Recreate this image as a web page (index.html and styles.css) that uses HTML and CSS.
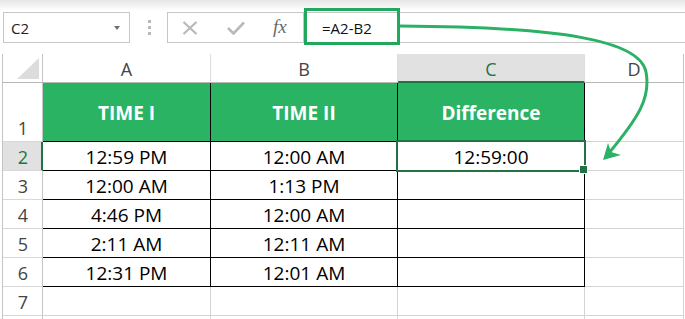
FILE: index.html
```html
<!DOCTYPE html>
<html>
<head>
<meta charset="utf-8">
<link rel="stylesheet" href="styles.css">
</head>
<body>
<div class="app">
  <div class="shade"></div>
  <div class="fbar">
    <div class="namebox"><span class="nb-text">C2</span><span class="nb-arrow"></span></div>
    <div class="grip"><i></i><i></i><i></i></div>
    <div class="formula">
      <div class="btns">
        <span class="btn bx"><svg width="16" height="14" viewBox="0 0 16 14"><path d="M1.5 1 L14.5 13 M14.5 1 L1.5 13" stroke="#b9b9b9" stroke-width="2.2" fill="none"/></svg></span>
        <span class="btn bc"><svg width="18" height="14" viewBox="0 0 18 14"><path d="M1 7 L6.5 12.5 L17 1.5" stroke="#b9b9b9" stroke-width="2.6" fill="none"/></svg></span>
        <span class="btn fx">fx</span>
      </div>
      <div class="input">=A2-B2</div>
    </div>
  </div>
  <div class="fbox"></div>

  <div class="sheet">
    <div class="corner"><svg width="22" height="21" viewBox="0 0 22 21"><polygon points="22,0 22,21 0,21" fill="#dcdcdc"/></svg></div>
    <div class="ch">A</div>
    <div class="ch">B</div>
    <div class="ch chs">C</div>
    <div class="ch">D</div>

    <div class="rh">1</div>
    <div class="c t g">TIME I</div>
    <div class="c t g">TIME II</div>
    <div class="c t g">Difference</div>
    <div class="c"></div>

    <div class="rh rhs">2</div>
    <div class="c t">12:59 PM</div>
    <div class="c t">12:00 AM</div>
    <div class="c t sel">12:59:00</div>
    <div class="c"></div>

    <div class="rh">3</div>
    <div class="c t">12:00 AM</div>
    <div class="c t">1:13 PM</div>
    <div class="c t"></div>
    <div class="c"></div>

    <div class="rh">4</div>
    <div class="c t">4:46 PM</div>
    <div class="c t">12:00 AM</div>
    <div class="c t"></div>
    <div class="c"></div>

    <div class="rh">5</div>
    <div class="c t">2:11 AM</div>
    <div class="c t">12:11 AM</div>
    <div class="c t"></div>
    <div class="c"></div>

    <div class="rh">6</div>
    <div class="c t">12:31 PM</div>
    <div class="c t">12:01 AM</div>
    <div class="c t"></div>
    <div class="c"></div>

    <div class="rh">7</div>
    <div class="c"></div>
    <div class="c"></div>
    <div class="c"></div>
    <div class="c"></div>

    <div class="rh"></div>
    <div class="c"></div>
    <div class="c"></div>
    <div class="c"></div>
    <div class="c"></div>
  </div>

  <svg class="arrow" width="685" height="319" viewBox="0 0 685 319">
    <path d="M400 26 C 560 27 640 40 646 72 C 651 98 638 118 609 153" stroke="#2bb166" stroke-width="3" fill="none"/>
    <polygon points="603,160 621,155 611,152 608,143" fill="#2bb166"/>
  </svg>
</div>
</body>
</html>
```

FILE: styles.css
```css
* { box-sizing: border-box; }
html, body { margin: 0; padding: 0; background: #fff; }
body { width: 685px; height: 319px; overflow: hidden; font-family: "Open Sans", "Noto Sans", sans-serif; }

.app { position: relative; width: 685px; height: 319px; overflow: hidden; }

.shade { position: absolute; left: 0; top: 0; width: 685px; height: 11px; background: linear-gradient(#e6e6e6, rgba(255,255,255,0)); }

.fbar { display: flex; height: 31px; margin-top: 12px; }

.namebox {
  width: 127px; margin-left: 3px; height: 31px;
  border: 1px solid #c6c6c6; background: #fff;
  display: flex; align-items: center; justify-content: space-between;
  padding: 1px 9px 0 7px;
}
.nb-text { font-size: 15px; color: #222; line-height: 28px; }
.nb-arrow { width: 0; height: 0; border-left: 3.5px solid transparent; border-right: 3.5px solid transparent; border-top: 4px solid #707070; }

.grip { width: 37px; display: flex; flex-direction: column; align-items: center; justify-content: center; gap: 3px; padding-left: 2px; }
.grip i { display: block; width: 3px; height: 3px; background: #b8b8b8; }

.formula { flex: 1; display: flex; height: 31px; border: 1px solid #c6c6c6; border-right: none; background: #fff; }
.btns { width: 136px; display: flex; align-items: center; border-right: 1px solid #c6c6c6; padding-left: 14px; }
.btn { display: flex; align-items: center; }
.bx { margin-right: 29px; }
.bc { margin-right: 28px; }
.btn.fx { font-family: "Liberation Serif", "DejaVu Serif", serif; font-style: italic; font-size: 19px; color: #6a6a6a; line-height: 28px; padding-bottom: 2px; }
.input { flex: 1; font-size: 15px; color: #111; line-height: 28px; padding-left: 18px; padding-top: 1px; }

.fbox { position: absolute; left: 304px; top: 8px; width: 96px; height: 37px; border: 3px solid #22a75e; }

.sheet {
  margin-top: 11px; margin-left: 2px;
  display: grid;
  grid-template-columns: 40px 168px 187px 187px 99px;
  grid-template-rows: 29px 59px repeat(7, 29px);
  border-left: 1px solid #c4c4c4;
}

.corner { border-right: 1px solid #c4c4c4; border-bottom: 1px solid #b8b8b8; display: flex; align-items: flex-end; justify-content: flex-end; padding: 0 3px 3px 0; }

.ch {
  border-right: 1px solid #dedede; border-bottom: 1px solid #b8b8b8;
  display: flex; align-items: center; justify-content: center;
  font-size: 18px; color: #444; line-height: 28px; padding-top: 1px;
}
.ch:nth-child(5) { border-right-color: #c4c4c4; }
.chs { background: #e1e1e1; color: #217346; border-bottom: 2px solid #217346; padding-top: 2px; }

.rh {
  border-right: 1px solid #c4c4c4; border-bottom: 1px solid #d8d8d8;
  display: flex; align-items: flex-end; justify-content: center;
  font-size: 18px; color: #444; line-height: 24px; padding-bottom: 1px; padding-left: 1px;
}
.rhs { background: #e1e1e1; color: #217346; border-right: 2px solid #217346; padding-left: 2px; }

.c {
  border-right: 1px solid #d4d4d4; border-bottom: 1px solid #d4d4d4;
  display: flex; align-items: flex-end; justify-content: center;
  font-size: 19px; color: #000; line-height: 26px; padding-bottom: 0;
}
.t { border-right-color: #000; border-bottom-color: #000; }
.g { background: #2ab363; color: #fff; font-weight: 700; align-items: center; padding-top: 1px; }

.sel { position: relative; }
.sel::after { content: ""; position: absolute; left: -2px; top: -2px; right: -2px; bottom: -2px; border: 2px solid #217346; }
.sel::before { content: ""; position: absolute; right: -4px; bottom: -4px; width: 7px; height: 7px; background: #217346; border: 1px solid #fff; z-index: 1; }

.arrow { position: absolute; left: 0; top: 0; pointer-events: none; }
```
